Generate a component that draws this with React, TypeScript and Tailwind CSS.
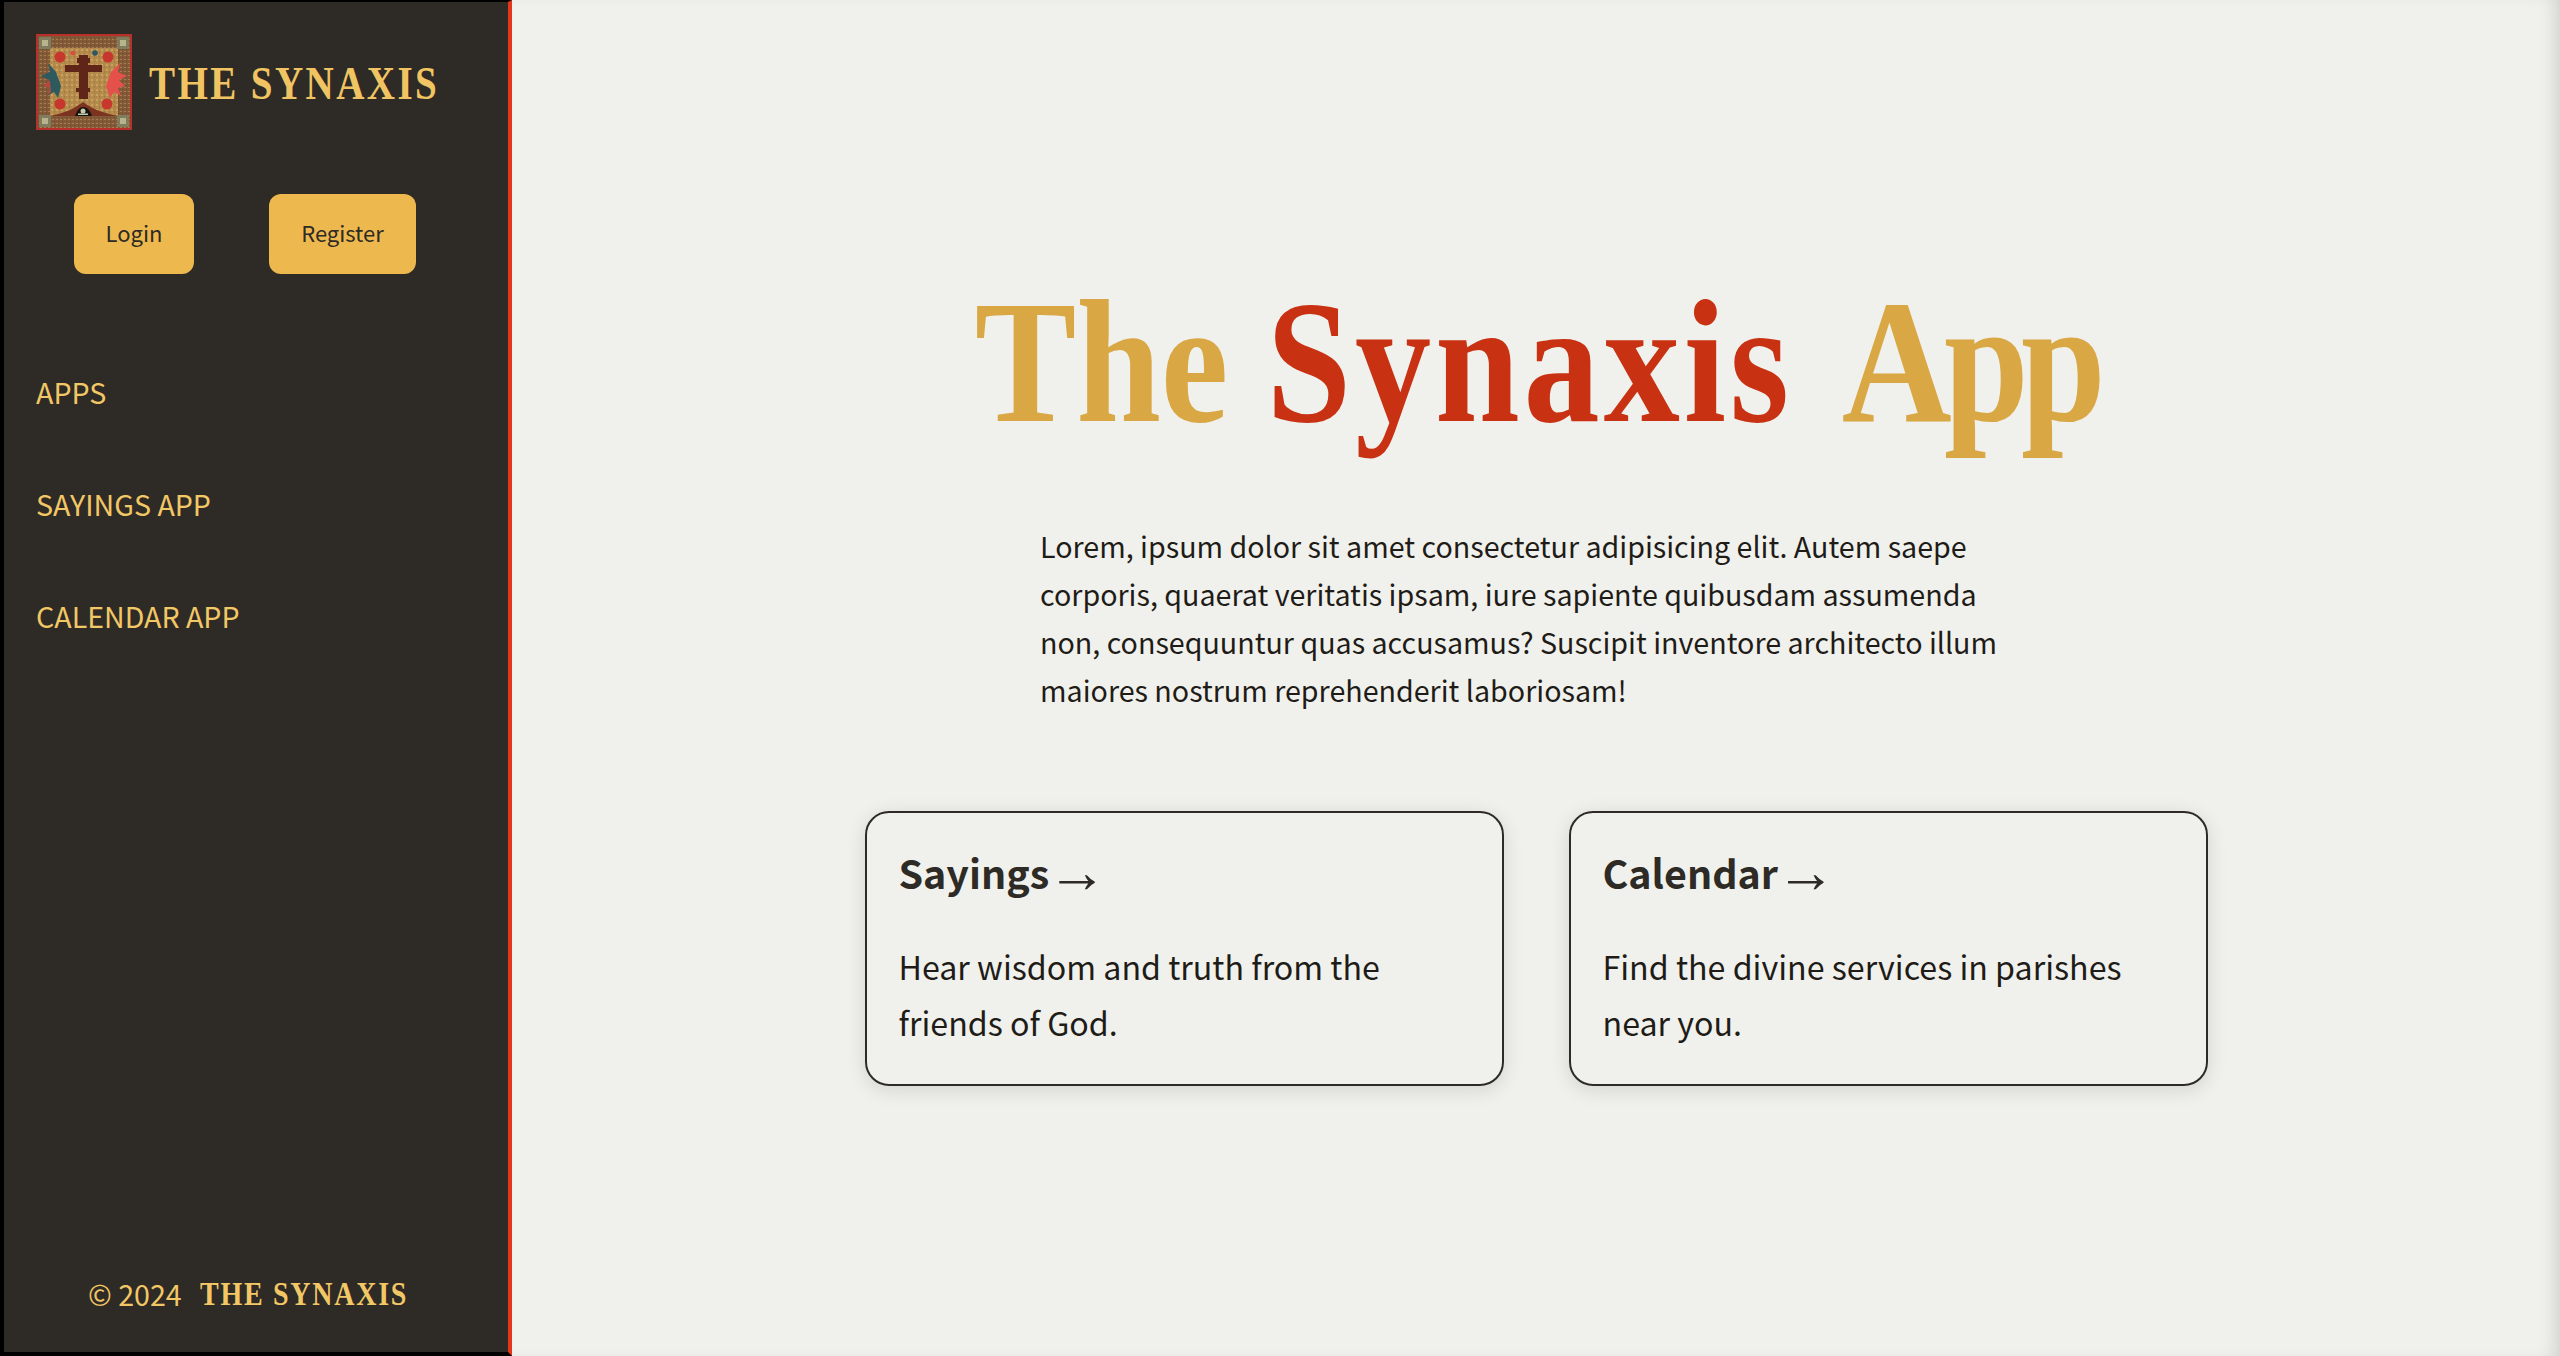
const navLinks = ['APPS', 'SAYINGS APP', 'CALENDAR APP']

const cards = [
  { title: 'Sayings', text: 'Hear wisdom and truth from the friends of God.' },
  { title: 'Calendar', text: 'Find the divine services in parishes near you.' },
]

function IconLogo() {
  return (
    <svg viewBox="0 0 96 96" className="w-24 h-24 shrink-0">
      <defs>
        <pattern id="speckle" width="5" height="5" patternUnits="userSpaceOnUse">
          <rect width="5" height="5" fill="#b48a4c" />
          <rect x="0" y="0" width="2" height="2" fill="#c9a25e" />
          <rect x="3" y="2" width="1" height="2" fill="#a27a42" />
          <rect x="1" y="3" width="1" height="1" fill="#bd9450" />
        </pattern>
        <pattern id="frame" width="4" height="4" patternUnits="userSpaceOnUse">
          <rect width="4" height="4" fill="#835a38" />
          <rect x="0" y="1" width="2" height="1" fill="#a67c50" />
          <rect x="2" y="3" width="1" height="1" fill="#6b452c" />
        </pattern>
      </defs>
      <rect width="96" height="96" fill="#b9302b" />
      <rect x="2" y="2" width="92" height="92" fill="url(#frame)" />
      <rect x="14" y="14" width="68" height="68" fill="url(#speckle)" />
      {[[3, 3], [81, 3], [3, 81], [81, 81]].map(([x, y]) => (
        <g key={`${x}-${y}`}>
          <rect x={x} y={y} width="12" height="12" fill="#807c5e" />
          <rect x={x + 3} y={y + 3} width="6" height="6" fill="#b9b38b" />
        </g>
      ))}
      {/* cross */}
      <g fill="#5e2518">
        <rect x="43" y="21" width="9" height="44" />
        <rect x="41" y="24" width="13" height="5" />
        <rect x="29" y="31" width="37" height="7" />
        <rect x="40" y="54" width="14" height="4" />
      </g>
      {/* rosettes */}
      <g fill="#c8372e">
        <circle cx="24" cy="23" r="5.5" />
        <circle cx="72" cy="23" r="5.5" />
        <circle cx="24" cy="70" r="5.5" />
        <circle cx="71" cy="70" r="5.5" />
        <circle cx="37" cy="19" r="2.5" fill="#d4503f" />
      </g>
      <circle cx="59" cy="19" r="2.8" fill="#2f5560" />
      {/* wings */}
      <path d="M5 42 L13 46 L7 52 L14 54 L11 62 L18 58 L22 64 L25 52 L20 38 L12 29 L14 38 Z" fill="#2d5a5e" />
      <path d="M5 42 L13 46 L7 52 L14 54 L11 62 L15 58 L14 47 Z" fill="#b9483c" />
      <path d="M91 42 L83 46 L89 52 L82 54 L85 62 L78 58 L74 64 L70 52 L75 38 L84 29 L82 38 Z" fill="#e4504a" />
      {/* hill */}
      <path d="M14 82 C28 79 36 76 47 68 C58 76 68 79 82 82 Z" fill="#7c3320" />
      <path d="M39 82 C41 76 44 73 47 73 C51 73 54 76 56 82 Z" fill="#14140f" />
      <circle cx="47" cy="77" r="2.5" fill="#c7c9b0" />
      <rect x="42" y="79.5" width="10" height="1.5" fill="#c7c9b0" />
    </svg>
  )
}

function Sidebar() {
  return (
    <aside className="w-[512px] h-screen shrink-0 flex flex-col bg-[#2e2a25] border-l-4 border-r-4 border-t-2 border-b-4 border-l-black border-t-black border-b-black border-r-[#e3361a]">
      <div className="flex items-center gap-[17px] pl-8 pt-8">
        <IconLogo />
        <span className="font-['Liberation_Serif',serif] font-bold text-[46px] leading-none tracking-[2.8px] scale-x-[0.85] origin-left text-[#f0c463] whitespace-nowrap pt-1">
          THE SYNAXIS
        </span>
      </div>

      <div className="flex gap-[75px] pl-[70px] mt-[64px]">
        <button className="h-20 w-[120px] pb-1 rounded-xl bg-[#edb94e] text-[#2e2a25] text-[22px]">Login</button>
        <button className="h-20 w-[147px] pb-1 rounded-xl bg-[#edb94e] text-[#2e2a25] text-[22px]">Register</button>
      </div>

      <nav className="flex flex-col gap-[68px] pl-8 mt-[96px]">
        {navLinks.map(link => (
          <a key={link} href="#" className="text-[28.6px] leading-[44px] text-[#f2c766]">
            {link}
          </a>
        ))}
      </nav>

      <div className="mt-auto mb-[36px] flex items-center gap-[18px] pl-[84px] text-[#f2c766] text-[28.6px] leading-[44px]">
        <span>© 2024</span>
        <span className="font-['Liberation_Serif',serif] font-bold text-[33px] tracking-[2px] scale-x-[0.85] origin-left whitespace-nowrap">
          THE SYNAXIS
        </span>
      </div>
    </aside>
  )
}

export default function App() {
  return (
    <div className="flex h-screen overflow-hidden bg-[#f0f1ec] text-[#2e2a25] font-['Noto_Sans_CJK_SC','Noto_Sans',sans-serif]">
      <Sidebar />

      <main className="flex-1 flex flex-col items-center pt-[262px] shadow-[inset_-14px_0_22px_-14px_rgba(0,0,0,0.2)]">
        <h1 className="font-['Liberation_Serif',serif] font-bold text-[176px] leading-[200px] scale-x-[0.865] whitespace-nowrap">
          <span className="text-[#d9a845]">The </span>
          <span className="text-[#c83213] tracking-[4.5px]">Synaxis </span>
          <span className="text-[#d9a845] tracking-[-9px] ml-[8px]">App</span>
        </h1>

        <p className="w-[992px] mt-[60px] text-[28.65px] leading-[48px] text-[#1f1c18]">
          Lorem, ipsum dolor sit amet consectetur adipisicing elit. Autem saepe corporis, quaerat veritatis
          ipsam, iure sapiente quibusdam assumenda non, consequuntur quas accusamus? Suscipit inventore
          architecto illum maiores nostrum reprehenderit laboriosam!
        </p>

        <div className="grid grid-cols-2 gap-[65px] w-[1343px] mt-[97px]">
          {cards.map(card => (
            <a
              key={card.title}
              href="#"
              className="h-[275px] px-8 pt-[27px] rounded-3xl border-2 border-[#2e2a25] shadow-[0_4px_20px_rgba(0,0,0,0.12)]"
            >
              <h2 className="text-[39.4px] leading-[64px] font-bold">
                {card.title}
                <span className="ml-[-2px] font-normal font-['Liberation_Sans',sans-serif] text-[60px] leading-none align-[-3px]">→</span>
              </h2>
              <p className="mt-[34px] text-[32.2px] leading-[56px] text-[#1f1c18]">{card.text}</p>
            </a>
          ))}
        </div>
      </main>
    </div>
  )
}
